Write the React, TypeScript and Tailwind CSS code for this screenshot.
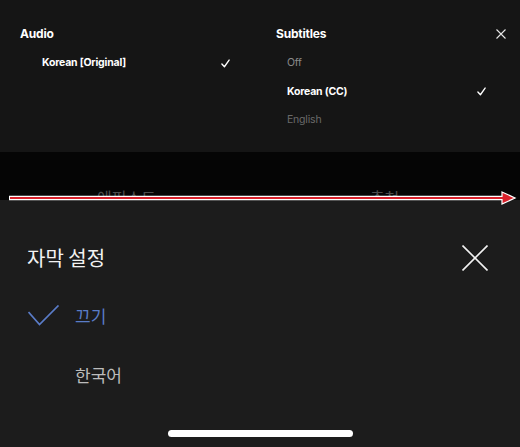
import React from 'react';

const Check = ({ className }: { className?: string }) => (
  <svg viewBox="0 0 10 10" className={className} fill="none" stroke="currentColor" strokeWidth="1.5" strokeLinecap="round" strokeLinejoin="round">
    <path d="M1 5.6 L3.8 8.6 L9 1.2" />
  </svg>
);

export default function App() {
  return (
    <div className="relative w-[520px] h-[447px] overflow-hidden bg-[#1c1c1c] flex flex-col">
      {/* player audio / subtitles panel */}
      <div className="h-[152px] bg-[#151515] flex pt-[18px] font-['Inter',sans-serif] text-white tracking-[-0.2px]">
        <div className="w-[260px] pl-[20px] pr-[30px]">
          <div className="h-[31px] flex items-center text-[12px] font-bold">Audio</div>
          <div className="h-[28.5px] flex items-center justify-between pl-[22px] text-[10.5px] font-bold">
            <span>Korean [Original]</span>
            <Check className="w-[9px] h-[9px]" />
          </div>
        </div>
        <div className="flex-1 pl-[16px]">
          <div className="h-[31px] flex items-center justify-between pr-[14px]">
            <span className="text-[12px] font-bold">Subtitles</span>
            <svg viewBox="0 0 10 10" className="w-[10px] h-[10px]" stroke="#e6e6e6" strokeWidth="1.1">
              <path d="M0.5 0.5 L9.5 9.5 M9.5 0.5 L0.5 9.5" />
            </svg>
          </div>
          <div className="pl-[11px] pr-[34px] text-[10.5px]">
            <div className="h-[28.5px] flex items-center text-[#8a8a8a]">Off</div>
            <div className="h-[28.5px] flex items-center justify-between font-bold">
              <span>Korean (CC)</span>
              <Check className="w-[9px] h-[9px]" />
            </div>
            <div className="h-[28.5px] flex items-center text-[#6a6a6a]">English</div>
          </div>
        </div>
      </div>

      {/* tab strip, mostly covered by the sheet */}
      <div className="h-[48px] bg-[#050505] overflow-hidden flex font-['Noto_Sans_CJK_KR',sans-serif] text-[16px] text-[#4c4c4c] pt-[33px]">
        <span className="ml-[97px]">에피소드</span>
        <span className="ml-[214px]">추천</span>
      </div>

      {/* subtitle settings sheet */}
      <div className="flex-1 flex flex-col px-[27px] pt-[40px] pb-[10px] font-['Noto_Sans_CJK_KR',sans-serif]">
        <div className="h-[36px] flex items-center justify-between">
          <span className="text-[20px] text-[#f2f2f2]">자막 설정</span>
          <svg viewBox="0 0 26 26" className="w-[26px] h-[26px] mr-[5px]" stroke="#f2f2f2" strokeWidth="1.6">
            <path d="M0.5 0.5 L25.5 25.5 M25.5 0.5 L0.5 25.5" />
          </svg>
        </div>
        <div className="mt-[20px] h-[40px] flex items-center">
          <div className="w-[48px] flex items-center">
            <svg viewBox="0 0 32 22" className="w-[32px] h-[22px] ml-[1px]" fill="none" stroke="#5a7cc8" strokeWidth="1.7">
              <path d="M0.5 7 L11.5 19.5 L30.5 0.5" />
            </svg>
          </div>
          <span className="text-[17px] text-[#5a7cc8]">끄기</span>
        </div>
        <div className="mt-[19px] h-[40px] flex items-center pl-[48px]">
          <span className="text-[17px] text-[#bcbcbc]">한국어</span>
        </div>
        <div className="mt-auto self-center w-[185px] h-[7px] rounded-full bg-white" />
      </div>

      {/* annotation arrow */}
      <svg className="absolute left-0 top-[186px]" width="520" height="24" viewBox="0 0 520 24">
        <line x1="9" y1="12" x2="505" y2="12" stroke="#ffffff" strokeWidth="4.5" />
        <polygon points="502,6 515,12 502,18" fill="#d8202a" stroke="#ffffff" strokeWidth="1.2" />
        <line x1="10" y1="12" x2="504" y2="12" stroke="#d8202a" strokeWidth="2" />
      </svg>
    </div>
  );
}
